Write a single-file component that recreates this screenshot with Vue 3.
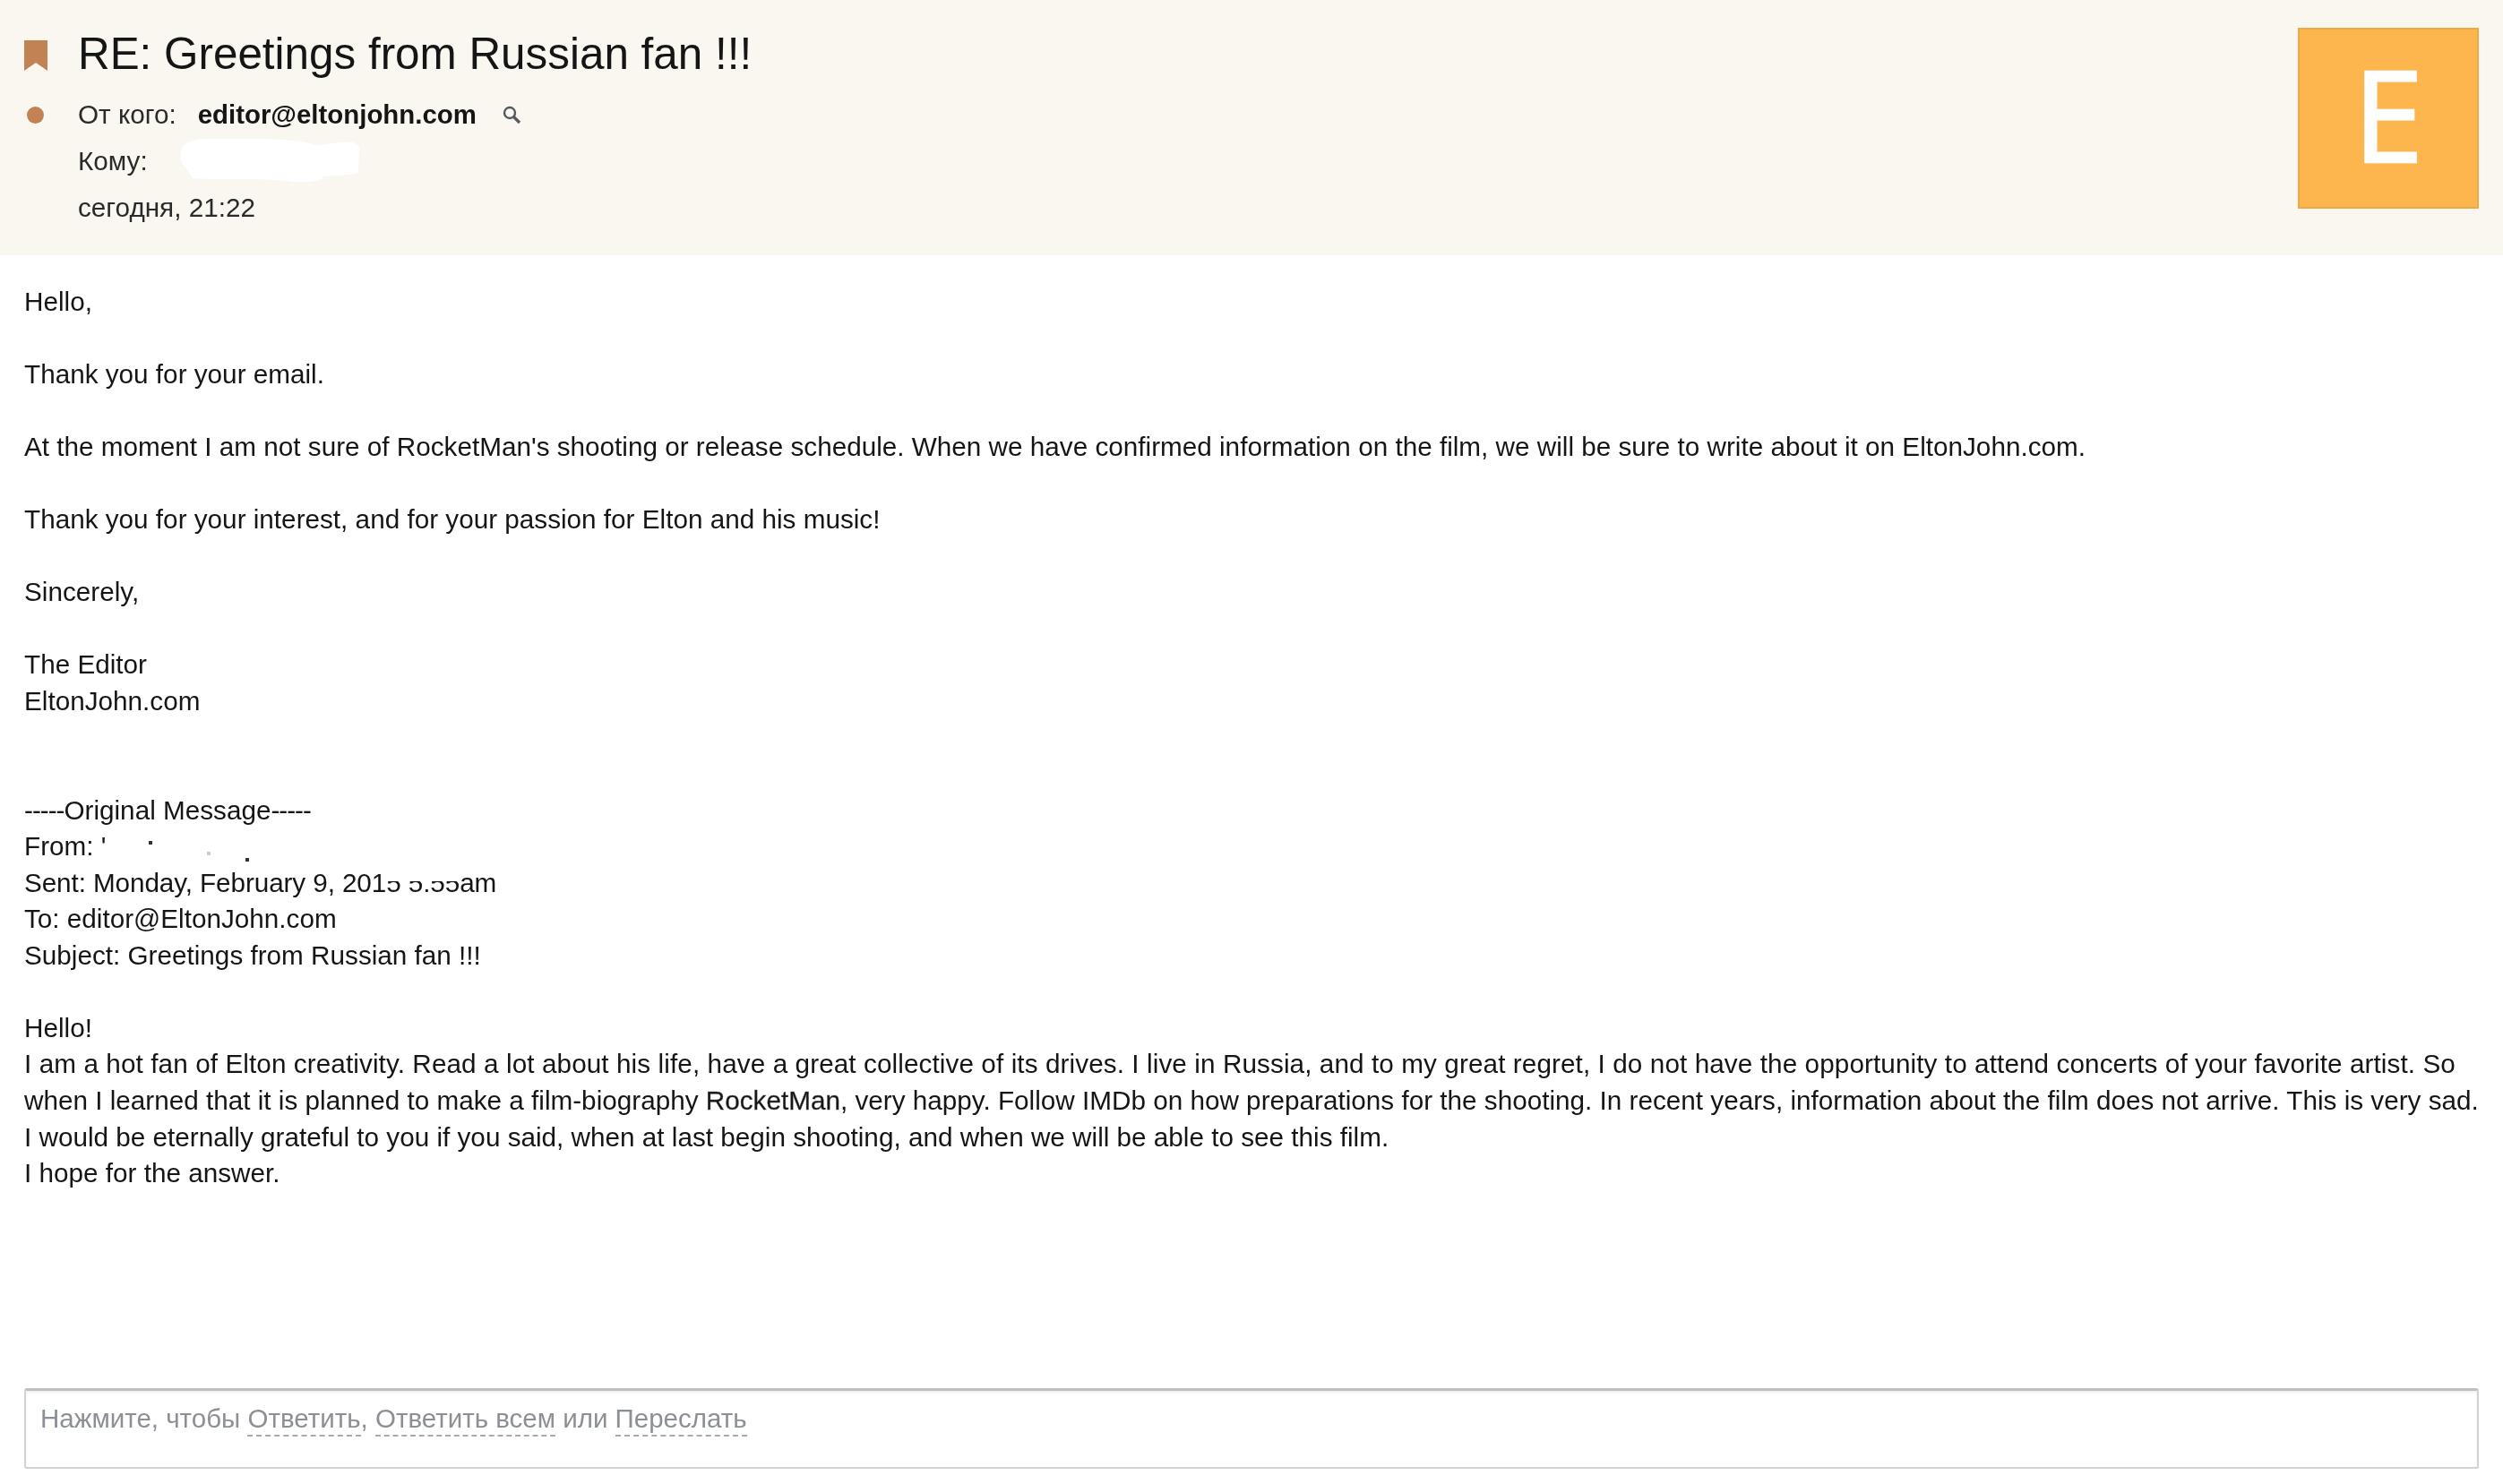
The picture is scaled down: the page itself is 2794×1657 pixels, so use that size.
<script setup>
const intro = [
  ["Hello,"],
  ["Thank you for your email."],
  ["At the moment I am not sure of RocketMan's shooting or release schedule. When we have confirmed information on the film, we will be sure to write about it on EltonJohn.com."],
  ["Thank you for your interest, and for your passion for Elton and his music!"],
  ["Sincerely,"],
  ["The Editor", "EltonJohn.com"],
]
</script>

<template>
  <div class="mail">
    <header class="head">
      <div class="head-left">
        <div class="subject-row">
          <svg class="bookmark" width="26" height="34" viewBox="0 0 26 34">
            <path d="M0 0H26V34L13 25L0 34Z" fill="#c38254" />
          </svg>
          <h1 class="subject">RE: Greetings from Russian fan !!!</h1>
        </div>
        <div class="meta-row">
          <span class="dot"></span>
          <span class="label">От кого:</span>
          <b class="sender">editor@eltonjohn.com</b>
          <svg class="search" width="22" height="22" viewBox="0 0 22 22" fill="none" stroke="#55585c">
            <circle cx="9" cy="9" r="6" stroke-width="2.4" />
            <path d="M13.5 13.5L20 20" stroke-width="3.2" />
          </svg>
        </div>
        <div class="meta-row">
          <span class="label">Кому:</span>
          <svg class="blot" width="200" height="50" viewBox="0 0 200 50">
            <path d="M2 10C8 1 20 0 40 0C80 -1 125 0 145 5C155 9 165 5 180 4C190 3 200 4 200 10L199 38C190 41 170 41 160 42C158 49 130 50 120 47C90 44 40 46 14 44C10 36 4 30 0 24Z" fill="#fff" />
          </svg>
        </div>
        <div class="meta-row">
          <span class="label">сегодня, 21:22</span>
        </div>
      </div>
      <div class="avatar">E</div>
    </header>

    <section class="body">
      <p v-for="(para, i) in intro" :key="i">
        <span v-for="line in para" :key="line" class="line">{{ line }}</span>
      </p>

      <p class="quoted">
        <span class="line"><span class="dashes">-----</span>Original Message<span class="dashes">-----</span></span>
        <span class="line">From: '<i class="speck s1"></i><i class="speck s2"></i><i class="speck s3"></i></span>
        <span class="line tight">Sent: Monday, February 9, 201<span class="smudged">5 5:55</span>am</span>
        <span class="line">To: editor@EltonJohn.com</span>
        <span class="line">Subject: Greetings from Russian fan !!!</span>
      </p>

      <p>
        <span class="line">Hello!</span>
        <span class="line wide">I am a hot fan of Elton creativity. Read a lot about his life, have a great collective of its drives. I live in Russia, and to my great regret, I do not have the opportunity to attend concerts of your favorite artist. So</span>
        <span class="line">when I learned that it is planned to make a film-biography <span class="film">RocketMan</span>, very happy. Follow IMDb on how preparations for the shooting. In recent years, information about the film does not arrive. This is very sad.</span>
        <span class="line">I would be eternally grateful to you if you said, when at last begin shooting, and when we will be able to see this film.</span>
        <span class="line">I hope for the answer.</span>
      </p>
    </section>

    <div class="reply">
      Нажмите, чтобы <a>Ответить</a>, <a>Ответить всем</a> или <a>Переслать</a>
    </div>
  </div>
</template>

<style scoped>
.mail {
  width: 2794px;
  height: 1657px;
  overflow: hidden;
  position: relative;
  background: #fff;
  color: #151515;
  font-family: "Liberation Sans", Arial, sans-serif;
  font-size: 29.7px;
  filter: blur(0.5px);
}
.head {
  height: 285px;
  box-sizing: border-box;
  background: #faf7f1;
  display: flex;
  justify-content: space-between;
  padding: 31px 27px 0 27px;
}
.subject-row {
  display: flex;
  align-items: center;
  height: 56px;
  margin-bottom: 15px;
}
.bookmark {
  margin-right: 34px;
  margin-top: 6px;
}
.subject {
  margin: 0;
  font-size: 49.4px;
  font-weight: 400;
  color: #151515;
}
.meta-row {
  display: flex;
  align-items: center;
  height: 52px;
  padding-left: 60px;
  position: relative;
  color: #2a2a2a;
}
.dot {
  position: absolute;
  left: 3px;
  top: 17px;
  width: 19px;
  height: 19px;
  border-radius: 50%;
  background: #c38254;
}
.sender {
  margin-left: 24px;
  font-size: 29.4px;
  color: #151515;
}
.search {
  margin-left: 28px;
}
.blot {
  margin-left: 36px;
}
.avatar {
  width: 202px;
  height: 202px;
  box-sizing: border-box;
  border: 2px solid #eea947;
  background: #fdb54e;
  color: #fff;
  font-family: "Open Sans", sans-serif;
  font-size: 141px;
  line-height: 186px;
  text-align: center;
  -webkit-text-stroke: 2.5px #fff;
}
.body {
  padding: 32px 27px 0;
  line-height: 40.55px;
}
.body p {
  margin: 0 0 40.55px;
}
.body .quoted {
  margin-top: 81.1px;
}
.line {
  display: block;
  white-space: nowrap;
}
.wide {
  letter-spacing: 0.09px;
}
.tight {
  letter-spacing: -0.1px;
}
.dashes {
  letter-spacing: -1px;
}
.film {
  -webkit-text-stroke: 0.4px #555;
}
.smudged {
  position: relative;
}
.smudged::after {
  content: "";
  position: absolute;
  left: 0;
  right: 0;
  top: 2px;
  height: 13px;
  background: #fff;
}
.speck {
  position: absolute;
  width: 4px;
  height: 4px;
  background: #333;
}
.s1 {
  margin-left: 48px;
  margin-top: 14px;
}
.s2 {
  margin-left: 156px;
  margin-top: 33px;
}
.s3 {
  margin-left: 113px;
  margin-top: 26px;
  opacity: 0.25;
}
.reply {
  position: absolute;
  top: 1550px;
  left: 27px;
  width: 2740px;
  height: 90px;
  box-sizing: border-box;
  border: 2px solid #d2d2d2;
  border-top: 3px solid #c0c0c0;
  border-radius: 3px;
  box-shadow: inset 0 2px 3px #f0f0f0;
  padding: 14px 16px;
  font-size: 29.5px;
  color: #8c9096;
}
.reply a {
  border-bottom: 2px dashed #aaa;
  padding-bottom: 2px;
}
</style>
